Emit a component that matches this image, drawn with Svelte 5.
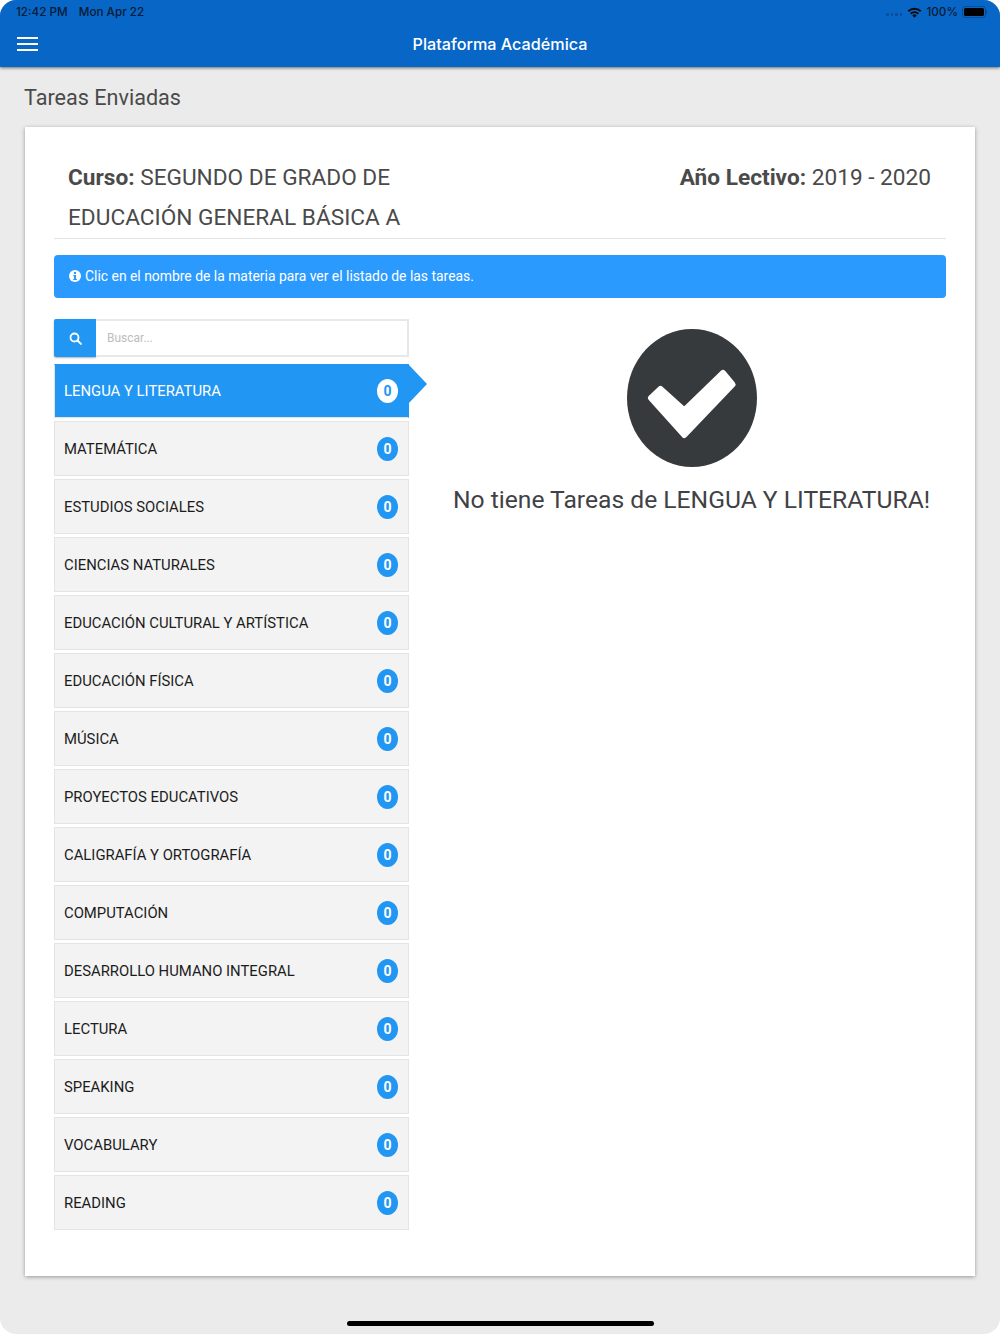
<script>
  const materias = [
    'LENGUA Y LITERATURA',
    'MATEMÁTICA',
    'ESTUDIOS SOCIALES',
    'CIENCIAS NATURALES',
    'EDUCACIÓN CULTURAL Y ARTÍSTICA',
    'EDUCACIÓN FÍSICA',
    'MÚSICA',
    'PROYECTOS EDUCATIVOS',
    'CALIGRAFÍA Y ORTOGRAFÍA',
    'COMPUTACIÓN',
    'DESARROLLO HUMANO INTEGRAL',
    'LECTURA',
    'SPEAKING',
    'VOCABULARY',
    'READING'
  ];

  let activa = $state(0);
</script>

<div class="screen">
  <header class="topbar">
    <div class="status">
      <div class="status-left">
        <span>12:42 PM</span>
        <span>Mon Apr 22</span>
      </div>
      <div class="status-right">
        <span class="dots"><i></i><i></i><i></i><i></i></span>
        <svg class="wifi" width="15" height="11" viewBox="0 0 15 11">
          <path d="M0.6 3.6a10 10 0 0 1 13.8 0l-1.3 1.4a8 8 0 0 0-11.2 0z" fill="#0a0a0a" />
          <path d="M3 6.1a6.6 6.6 0 0 1 9 0l-1.4 1.4a4.6 4.6 0 0 0-6.2 0z" fill="#0a0a0a" />
          <path d="M5.3 8.4a3.2 3.2 0 0 1 4.4 0L7.5 10.7z" fill="#0a0a0a" />
        </svg>
        <span>100%</span>
        <span class="battery"><span class="battery-fill"></span></span>
      </div>
    </div>
    <div class="navbar">
      <button class="menu" aria-label="Menú">
        <span></span><span></span><span></span>
      </button>
      <div class="nav-title">Plataforma Académica</div>
    </div>
  </header>

  <main class="page">
    <h1 class="page-title">Tareas Enviadas</h1>

    <section class="card">
      <div class="info-row">
        <div class="curso"><b>Curso:</b> SEGUNDO DE GRADO DE EDUCACIÓN GENERAL BÁSICA A</div>
        <div class="lectivo"><b>Año Lectivo:</b> 2019 - 2020</div>
      </div>

      <div class="alert">
        <svg width="12" height="12" viewBox="0 0 12 12">
          <circle cx="6" cy="6" r="6" fill="#fff" />
          <rect x="4.9" y="2" width="2.2" height="2" fill="#2b9aff" />
          <path d="M4.2 5h2.9v4h.8v1H4.2V9h.8V6h-.8z" fill="#2b9aff" />
        </svg>
        Clic en el nombre de la materia para ver el listado de las tareas.
      </div>

      <div class="columns">
        <div class="left">
          <div class="search">
            <span class="search-btn">
              <svg width="13" height="13" viewBox="0 0 13 13" fill="none" stroke="#fff" stroke-width="1.8">
                <circle cx="5.5" cy="5.5" r="4" />
                <path d="M8.5 8.5l3.4 3.4" stroke-linecap="round" stroke-width="2" />
              </svg>
            </span>
            <input type="text" placeholder="Buscar..." />
          </div>

          <ul class="list">
            {#each materias as materia, i}
              <li>
                <button class="item" class:active={i === activa} onclick={() => (activa = i)}>
                  <span>{materia}</span>
                  <span class="badge">0</span>
                </button>
              </li>
            {/each}
          </ul>
        </div>

        <div class="right">
          <svg class="check" width="130" height="138" viewBox="0 0 130 138">
            <ellipse cx="65" cy="69" rx="65" ry="69" fill="#373a3c" />
            <path
              d="M33.5 60 L57.3 81.5 L96 44 L105.5 55.5 L57.3 106 L24 69 Z"
              fill="#fff"
              stroke="#fff"
              stroke-width="6"
              stroke-linejoin="round"
            />
          </svg>
          <p class="empty">No tiene Tareas de {materias[activa]}!</p>
        </div>
      </div>
    </section>
  </main>

  <div class="home"></div>
</div>

<style>
  :global(body) {
    background: #fff;
  }

  .screen {
    position: relative;
    height: 1334px;
    border-radius: 16px;
    overflow: hidden;
    background: #ebebeb;
    font-family: Roboto, "Liberation Sans", sans-serif;
  }

  .topbar {
    height: 67px;
    background: #0866c6;
    box-shadow: 0 1px 3px rgba(0, 0, 0, 0.55);
  }

  .status {
    height: 24px;
    padding: 0 14px 0 16px;
    display: flex;
    justify-content: space-between;
    align-items: center;
    font-family: Inter, sans-serif;
    font-size: 11.7px;
    font-weight: 500;
    color: #071a33;
  }

  .status-left {
    display: flex;
    gap: 11px;
  }

  .status-right {
    display: flex;
    align-items: center;
    gap: 4px;
  }

  .dots {
    display: flex;
    gap: 2px;
    margin-right: 1px;
    padding-top: 5px;
  }

  .dots i {
    width: 2.5px;
    height: 2.5px;
    border-radius: 50%;
    background: #0b4d94;
  }

  .battery {
    position: relative;
    width: 24px;
    height: 12px;
    border: 1px solid #0b4d94;
    border-radius: 3px;
    padding: 1px;
    box-sizing: border-box;
  }

  .battery::after {
    content: "";
    position: absolute;
    left: 100%;
    top: 3px;
    width: 1.5px;
    height: 4px;
    background: #0b4d94;
    border-radius: 0 1px 1px 0;
  }

  .battery-fill {
    display: block;
    height: 100%;
    background: #000;
    border-radius: 1.5px;
  }

  .navbar {
    height: 43px;
    padding: 0 17px;
    display: flex;
    align-items: center;
    position: relative;
  }

  .menu {
    width: 21px;
    height: 14px;
    padding: 0;
    border: none;
    background: none;
    display: flex;
    flex-direction: column;
    justify-content: space-between;
    margin-top: -4px;
  }

  .menu span {
    display: block;
    height: 2px;
    background: #fff;
  }

  .nav-title {
    position: absolute;
    left: 0;
    right: 0;
    top: 8px;
    text-align: center;
    font-family: Inter, sans-serif;
    font-size: 16.2px;
    font-weight: 500;
    line-height: 24px;
    color: #fff;
  }

  .page {
    padding: 0 25px;
  }

  .page-title {
    margin: 0 0 0 -1px;
    padding: 16px 0 15px;
    font-size: 21.6px;
    font-weight: 400;
    line-height: 29px;
    color: #4a4a4a;
  }

  .card {
    height: 1149px;
    box-sizing: border-box;
    padding: 31px 29px 0;
    background: #fff;
    box-shadow: 0 1px 4px rgba(0, 0, 0, 0.35);
  }

  .info-row {
    display: flex;
    justify-content: space-between;
    padding: 0 15px 0 14px;
    border-bottom: 1px solid #e3e3e3;
    font-size: 22.65px;
    line-height: 40px;
    color: #4a4a4a;
  }

  .curso {
    width: 345px;
  }

  .alert {
    margin-top: 16px;
    height: 43px;
    box-sizing: border-box;
    padding: 0 0 2px 15px;
    display: flex;
    align-items: center;
    gap: 4px;
    border-radius: 4px;
    background: #2b9aff;
    font-size: 13.9px;
    color: #fff;
  }

  .columns {
    display: grid;
    grid-template-columns: 355px 1fr;
    gap: 28px;
    margin-top: 21px;
  }

  .search {
    display: flex;
    height: 38px;
  }

  .search-btn {
    width: 42px;
    display: flex;
    align-items: center;
    justify-content: center;
    background: #2196f3;
    border-radius: 2px 0 0 2px;
    box-shadow: 0 1px 2px rgba(0, 0, 0, 0.3);
  }

  .search input {
    flex: 1;
    min-width: 0;
    box-sizing: border-box;
    padding: 0 10px 0 11px;
    border: 2px solid #e8e8e8;
    border-left: none;
    outline: none;
    font-family: inherit;
    font-size: 12px;
  }

  .search input::placeholder {
    color: #bdbdbd;
  }

  .list {
    list-style: none;
    margin: 7px 0 0;
    padding: 0;
    display: flex;
    flex-direction: column;
    gap: 3px;
  }

  .item {
    position: relative;
    width: 100%;
    height: 55px;
    padding: 0 10px 0 9px;
    box-sizing: border-box;
    display: flex;
    justify-content: space-between;
    align-items: center;
    border: 1px solid #e4e4e4;
    background: #f3f3f3;
    font-family: inherit;
    font-size: 14.85px;
    color: #1c1c1c;
    text-align: left;
  }

  .list li:first-child .item {
    height: 54px;
  }

  .item.active {
    background: #2196f3;
    color: #fff;
    border-color: #e4e4e4;
    border-top-color: #2196f3;
    border-right-color: #2196f3;
  }

  .item.active::after {
    content: "";
    position: absolute;
    left: 100%;
    top: -1px;
    border-left: 19px solid #2196f3;
    border-top: 20px solid transparent;
    border-bottom: 20px solid transparent;
  }

  .badge {
    width: 21px;
    height: 24px;
    border-radius: 50%;
    background: #2196f3;
    color: #fff;
    font-size: 14px;
    font-weight: 700;
    line-height: 24px;
    text-align: center;
  }

  .item.active .badge {
    background: #fff;
    color: #2196f3;
  }

  .right {
    display: flex;
    flex-direction: column;
    align-items: center;
    padding-top: 10px;
  }

  .empty {
    margin: 16px 0 0;
    font-size: 24.65px;
    line-height: 34px;
    color: #3f4245;
    white-space: nowrap;
  }

  .home {
    position: absolute;
    left: 347px;
    bottom: 8px;
    width: 307px;
    height: 5px;
    border-radius: 3px;
    background: #000;
  }
</style>
